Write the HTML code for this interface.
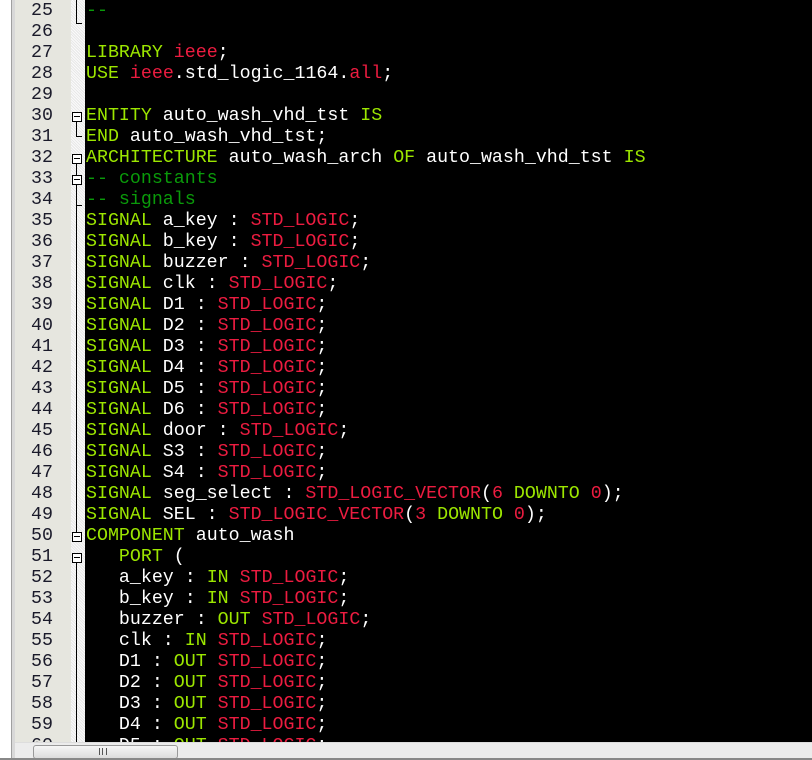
<!DOCTYPE html>
<html><head><meta charset="utf-8"><style>
html,body{margin:0;padding:0;width:812px;height:760px;overflow:hidden;background:#fff;position:relative}
.left{position:absolute;left:0;top:0;width:11px;height:760px;background:#fff}
.lb{position:absolute;left:11px;top:0;width:4px;height:760px;background:#d8d8d8;border-left:1px solid #a0a0a0}
.gut{position:absolute;left:15px;top:0;width:56px;height:742px;background:#e6e6df}
.fold{position:absolute;left:71px;top:0;width:14px;height:742px;background:#f4f4f4;background-image:repeating-linear-gradient(45deg,#e8e8e8 0 1px,#fafafa 1px 2px)}
.code{position:absolute;left:85px;top:0;width:727px;height:742px;background:#000}
.ln,.tx{position:absolute;font-family:"Liberation Mono",monospace;font-size:18.3px;line-height:21px;white-space:pre}
.ln{left:15px;width:38px;text-align:right;color:#1a1a2a}
.tx{left:86px;color:#fff}
.k{color:#9ce600}.r{color:#ec1c40}.c{color:#0a9a0a}
.box{position:absolute;left:72px;width:8px;height:8px;border:1px solid #000;background:#fff;z-index:2}
.box:after{content:"";position:absolute;left:1px;top:3px;width:6px;height:1px;background:#000}
.vl{position:absolute;left:76px;width:1px;background:#000}
.hl{position:absolute;left:76px;width:6px;height:1px;background:#000}
.sb{position:absolute;left:15px;top:742px;width:797px;height:16px;background:#ececec;border-top:1px solid #ddd}
.thumb{position:absolute;left:33px;top:745px;width:143px;height:12px;border:1px solid #999;border-radius:3px;background:linear-gradient(#f6f6f6,#dcdcdc)}
.bot{position:absolute;left:0;top:758px;width:812px;height:2px;background:#888}
</style></head><body>
<div class="left"></div><div class="lb"></div>
<div class="gut"></div><div class="fold"></div><div class="code"></div>
<div id="c"></div>
<div class="vl" style="top:0;height:23px"></div><div class="hl" style="top:23px"></div>
<div class="box" style="top:112px"></div>
<div class="vl" style="top:122px;height:14px"></div><div class="hl" style="top:136px"></div>
<div class="box" style="top:154px"></div>
<div class="box" style="top:175px"></div>
<div class="vl" style="top:185px;height:20px"></div><div class="hl" style="top:205px"></div>
<div class="vl" style="top:164px;height:368px"></div>
<div class="box" style="top:532px"></div>
<div class="box" style="top:553px"></div>
<div class="vl" style="top:563px;height:179px"></div>
<div class="sb"></div>
<div style="position:absolute;left:21px;top:746px;width:0;height:0;border-top:4px solid transparent;border-bottom:4px solid transparent;border-right:4px solid #333;margin-left:44px"></div>
<div class="thumb"></div>
<div style="position:absolute;left:99px;top:748px;width:6px;height:7px;border-left:1px solid #555;border-right:1px solid #555"></div>
<div style="position:absolute;left:102px;top:748px;width:1px;height:7px;background:#555"></div>
<div class="bot"></div>
<script>
var L={
25:'<span class="c">--</span>',26:'',
27:'<span class="k">LIBRARY</span> <span class="r">ieee</span>;',
28:'<span class="k">USE</span> <span class="r">ieee</span>.std_logic_1164.<span class="r">all</span>;',29:'',
30:'<span class="k">ENTITY</span> auto_wash_vhd_tst <span class="k">IS</span>',
31:'<span class="k">END</span> auto_wash_vhd_tst;',
32:'<span class="k">ARCHITECTURE</span> auto_wash_arch <span class="k">OF</span> auto_wash_vhd_tst <span class="k">IS</span>',
33:'<span class="c">-- constants</span>',34:'<span class="c">-- signals</span>'};
var s=['a_key','b_key','buzzer','clk','D1','D2','D3','D4','D5','D6','door','S3','S4'];
for(var i=0;i<s.length;i++)L[35+i]='<span class="k">SIGNAL</span> '+s[i]+' : <span class="r">STD_LOGIC</span>;';
L[48]='<span class="k">SIGNAL</span> seg_select : <span class="r">STD_LOGIC_VECTOR</span>(<span class="r">6</span> <span class="k">DOWNTO</span> <span class="r">0</span>);';
L[49]='<span class="k">SIGNAL</span> SEL : <span class="r">STD_LOGIC_VECTOR</span>(<span class="r">3</span> <span class="k">DOWNTO</span> <span class="r">0</span>);';
L[50]='<span class="k">COMPONENT</span> auto_wash';
L[51]='   <span class="k">PORT</span> (';
var p=[['a_key','IN'],['b_key','IN'],['buzzer','OUT'],['clk','IN'],['D1','OUT'],['D2','OUT'],['D3','OUT'],['D4','OUT'],['D5','OUT']];
for(i=0;i<p.length;i++)L[52+i]='   '+p[i][0]+' : <span class="k">'+p[i][1]+'</span> <span class="r">STD_LOGIC</span>;';
var h='';
for(var n=25;n<=60;n++){var t=1+21*(n-25);
h+='<div class="ln" style="top:'+t+'px">'+n+'</div><div class="tx" style="top:'+t+'px">'+(L[n]||'')+'</div>';}
document.getElementById('c').innerHTML=h;
</script>
</body></html>
